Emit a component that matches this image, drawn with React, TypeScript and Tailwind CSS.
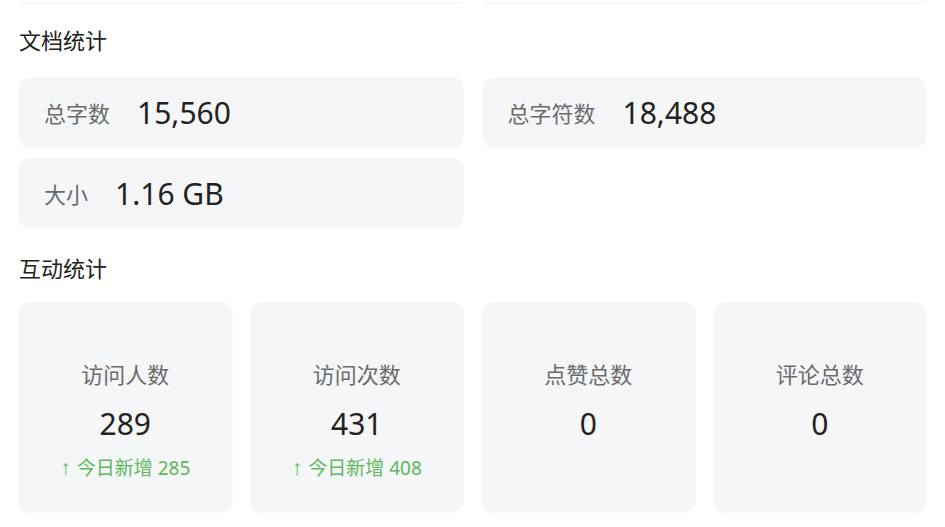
import React from "react";

const font = { fontFamily: '"Noto Sans", "Noto Sans CJK SC", sans-serif' };

function DocCard({ label, value }: { label: string; value: string }) {
  return (
    <div className="flex h-[69px] items-center rounded-[10px] bg-[#f5f6f8] pl-[25px] shadow-[0_0_3px_rgba(0,0,0,0.05)]">
      <span className="text-[22px] leading-[30px] text-[#6b6b6b]">{label}</span>
      <span className="ml-[27px] text-[30px] leading-[40px] text-[#222222]">{value}</span>
    </div>
  );
}

function StatCard({ label, value, delta }: { label: string; value: string; delta?: string }) {
  return (
    <div className="flex h-[209px] flex-col items-center rounded-[10px] bg-[#f5f6f8] pt-[56px] shadow-[0_0_3px_rgba(0,0,0,0.05)]">
      <div className="text-[22px] leading-[30px] text-[#6b6b6b]">{label}</div>
      <div className="mt-[15px] text-[30px] leading-[40px] text-[#222222]">{value}</div>
      {delta && (
        <div className="mt-[11px] flex items-center text-[19px] leading-[26px] text-[#5cb85c]">
          <span style={{ fontFamily: '"Liberation Sans", sans-serif' }} className="mr-[6px] text-[21px] font-bold leading-[26px]">↑</span>
          <span>今日新增 {delta}</span>
        </div>
      )}
    </div>
  );
}

export default function App() {
  return (
    <div className="h-[527px] w-[945px] overflow-hidden bg-white px-[19px]" style={font}>
      <div className="grid grid-cols-2 gap-[20px]">
        <div className="h-[2px] rounded-b-[10px] bg-white shadow-[0_1px_3px_rgba(0,0,0,0.08)]" />
        <div className="h-[2px] rounded-b-[10px] bg-white shadow-[0_1px_3px_rgba(0,0,0,0.08)]" />
      </div>
      <div className="mt-[23px] text-[22px] leading-[30px] text-[#222222]">文档统计</div>
      <div className="mt-[23px] grid grid-cols-2 gap-x-[20px] gap-y-[12px]">
        <DocCard label="总字数" value="15,560" />
        <DocCard label="总字符数" value="18,488" />
        <DocCard label="大小" value="1.16 GB" />
      </div>
      <div className="mt-[25px] text-[22px] leading-[30px] text-[#222222]">互动统计</div>
      <div className="mt-[20px] grid grid-cols-4 gap-[19px]">
        <StatCard label="访问人数" value="289" delta="285" />
        <StatCard label="访问次数" value="431" delta="408" />
        <StatCard label="点赞总数" value="0" />
        <StatCard label="评论总数" value="0" />
      </div>
    </div>
  );
}
